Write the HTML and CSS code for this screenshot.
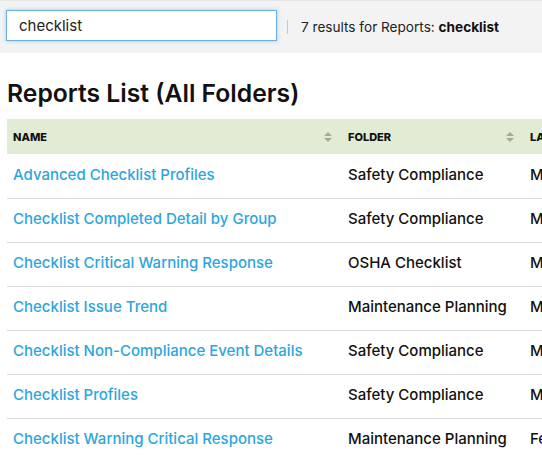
FILE: index.html
```html
<!DOCTYPE html>
<html>
<head>
<meta charset="utf-8">
<link rel="stylesheet" href="styles.css">
</head>
<body>
<div class="topbar">
  <div class="search">checklist</div>
  <div class="sep"></div>
  <div class="results">7 results for Reports: <b>checklist</b></div>
</div>
<h1 class="title">Reports List (All Folders)</h1>
<div class="table">
  <div class="row head">
    <div class="c1">NAME<span class="sort"></span></div>
    <div class="c2">FOLDER<span class="sort"></span></div>
    <div class="c3">LA</div>
  </div>
  <div class="row"><div class="c1 link">Advanced Checklist Profiles</div><div class="c2">Safety Compliance</div><div class="c3">M</div></div>
  <div class="row"><div class="c1 link">Checklist Completed Detail by Group</div><div class="c2">Safety Compliance</div><div class="c3">M</div></div>
  <div class="row"><div class="c1 link">Checklist Critical Warning Response</div><div class="c2">OSHA Checklist</div><div class="c3">M</div></div>
  <div class="row"><div class="c1 link">Checklist Issue Trend</div><div class="c2">Maintenance Planning</div><div class="c3">M</div></div>
  <div class="row"><div class="c1 link">Checklist Non-Compliance Event Details</div><div class="c2">Safety Compliance</div><div class="c3">M</div></div>
  <div class="row"><div class="c1 link">Checklist Profiles</div><div class="c2">Safety Compliance</div><div class="c3">M</div></div>
  <div class="row last"><div class="c1 link">Checklist Warning Critical Response</div><div class="c2">Maintenance Planning</div><div class="c3">Fe</div></div>
</div>
</body>
</html>
```
FILE: styles.css
```css
html, body { margin: 0; padding: 0; background: #fff; overflow: hidden; }
body { font-family: "Inter", "Liberation Sans", sans-serif; color: #111; width: 542px; }
.topbar {
  height: 53px; background: #f3f3f3; border-top: 1px solid #e6e6e6;
  box-sizing: border-box; display: flex; align-items: flex-start;
}
.search {
  margin: 9px 0 0 6px; width: 271px; height: 31px; box-sizing: border-box;
  border: 1px solid #6aaee8; box-shadow: 0 0 4px rgba(102,175,233,0.55);
  background: #fff; padding: 0 12px; font-size: 15px; line-height: 29px; color: #222;
}
.sep { width: 1px; height: 14px; background: #c8c8c8; margin: 19px 0 0 10px; }
.results { margin: 17px 0 0 13px; font-size: 13.6px; color: #222; line-height: 18px; }
.results b { font-weight: 700; color: #111; }
.title { margin: 25px 0 0 7px; font-size: 24.7px; font-weight: 600; line-height: 30px; color: #111; }
.table { margin: 11px 0 0 7px; width: 700px; }
.row { display: flex; height: 44px; align-items: center; padding-bottom: 5px; border-bottom: 1px solid #dcdcdc; box-sizing: border-box; font-size: 15px; font-weight: 500; white-space: nowrap; }
.row.last { border-bottom: none; }
.row.head { background: #e2ecd4; height: 35px; padding-bottom: 0; margin-bottom: 1px; border-bottom: none; font-size: 11px; font-weight: 800; }
.c1 { width: 335px; padding-left: 6px; box-sizing: border-box; position: relative; }
.c2 { width: 182px; padding-left: 6px; box-sizing: border-box; position: relative; }
.c3 { padding-left: 6px; }
.link { color: #2ba6de; }
.sort { position: absolute; right: 10px; top: 50%; width: 8px; height: 10px; margin-top: -5px; }
.sort::before, .sort::after { content: ""; position: absolute; left: 0; border-left: 4px solid transparent; border-right: 4px solid transparent; }
.sort::before { top: 0; border-bottom: 4px solid #a3aa9c; }
.sort::after { bottom: 0; border-top: 4px solid #a3aa9c; }
```
